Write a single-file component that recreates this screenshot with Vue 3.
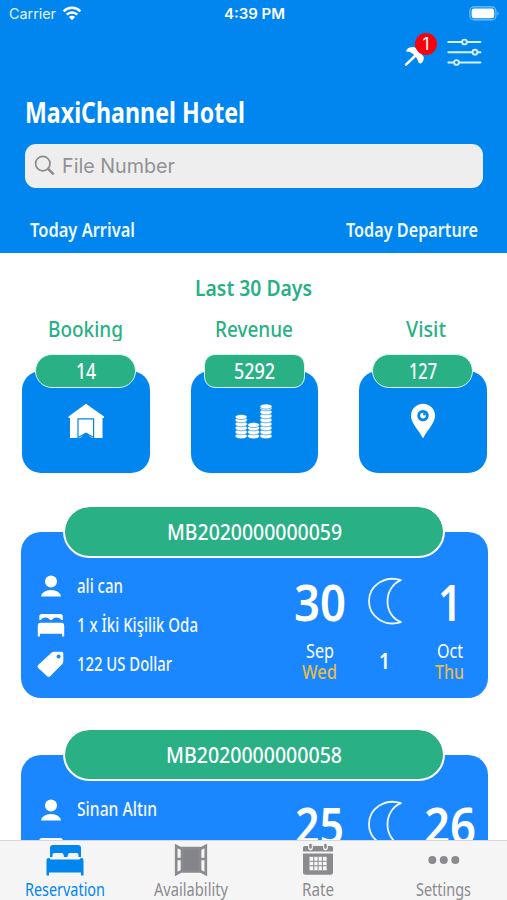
<script setup>
// Condenses a single-line label so that it occupies the given width.
const fitText = (el, { value }) => {
  el.style.transform = 'none'
  el.style.marginRight = '0'
  const natural = el.getBoundingClientRect().width
  el.style.transform = `scaleX(${value / natural})`
  el.style.marginRight = `${value - natural}px`
}
const vFit = { mounted: fitText, updated: fitText }

const stats = [
  { label: 'Booking', labelWidth: 75, value: '14', valueWidth: 20, icon: 'house' },
  { label: 'Revenue', labelWidth: 78, value: '5292', valueWidth: 41, icon: 'coins' },
  { label: 'Visit', labelWidth: 40, value: '127', valueWidth: 28, icon: 'pin' },
]

const coins = [
  { x: 241.2, top: 419, count: 5 },
  { x: 253.6, top: 427, count: 3 },
  { x: 266, top: 408.5, count: 8 },
]

const reservations = [
  {
    code: 'MB2020000000059', codeWidth: 175,
    guest: 'ali can', guestWidth: 46,
    room: '1 x İki Kişilik Oda', roomWidth: 121,
    price: '122 US Dollar', priceWidth: 95,
    nights: '1',
    from: { day: '30', dayWidth: 52, month: 'Sep', monthWidth: 28, week: 'Wed', weekWidth: 35 },
    to: { day: '1', dayWidth: 24, month: 'Oct', monthWidth: 26, week: 'Thu', weekWidth: 29 },
  },
  {
    code: 'MB2020000000058', codeWidth: 176,
    guest: 'Sinan Altın', guestWidth: 80,
    from: { day: '25', dayWidth: 49 },
    to: { day: '26', dayWidth: 52 },
  },
]

const tabs = [
  { label: 'Reservation', width: 80, icon: 'bed', active: true },
  { label: 'Availability', width: 74, icon: 'window' },
  { label: 'Rate', width: 32, icon: 'calendar' },
  { label: 'Settings', width: 55, icon: 'dots' },
]
</script>

<template>
  <div class="screen">
    <header class="header">
      <div class="status">
        <div class="carrier">
          <span v-fit="47">Carrier</span>
          <svg width="20" height="15" viewBox="0 0 20 15" fill="none" stroke="#fff" stroke-width="2.5">
            <path d="M1.6 5.3a12 12 0 0 1 16.8 0M4.7 8.6a7.6 7.6 0 0 1 10.6 0" />
            <path d="M10 14.2 6.9 11a4.4 4.4 0 0 1 6.2 0Z" fill="#fff" stroke="none" />
          </svg>
        </div>
        <span v-fit="61" class="clock">4:39 PM</span>
        <div class="battery-wrap">
          <svg width="31" height="15" viewBox="0 0 31 15">
            <rect x=".9" y=".9" width="26" height="13" rx="4" fill="none" stroke="#7fc2f7" stroke-width="1.1" />
            <rect x="2.6" y="2.6" width="22.6" height="9.6" rx="2.3" fill="#fff" />
            <path d="M28.5 5.2q2.2 2.2 0 4.4z" fill="#7fc2f7" />
          </svg>
        </div>
      </div>

      <div class="actions">
        <div class="notify">
          <svg width="23" height="23" viewBox="0 0 23 23">
            <path d="M2 19.7 11.500 10.500" stroke="#fff" stroke-width="2.5" stroke-linecap="round" />
            <path d="M2.300 5.200C4.500 1.300 10 1.300 12 3l7.500 8.500C20.500 14 19 17.700 16.500 18.400c-1.200.3-1.900-.6-2.300-1.600C13.500 14 12 12 10.200 10 8 8 6 6.700 4 6.800 2.300 6.800 1.800 6 2.300 5.200Z" fill="#fff" />
          </svg>
          <span class="badge">1</span>
        </div>
        <svg width="36" height="30" viewBox="0 0 36 30" fill="#0086ee" stroke="#d9f1ff" stroke-width="1.9" stroke-linecap="round">
          <path d="M1.3 5H33.500M1.300 15.200H33.500M1.300 25.500H33.500" />
          <circle cx="17.500" cy="5" r="2.400" /><circle cx="28" cy="15.200" r="2.400" /><circle cx="9.500" cy="25.500" r="2.400" />
        </svg>
      </div>

      <h1 class="hotel"><span v-fit="220">MaxiChannel Hotel</span></h1>

      <div class="search">
        <svg width="22" height="22" viewBox="0 0 22 22" fill="none" stroke="#8b8b8f">
          <circle cx="8.800" cy="8.600" r="7.200" stroke-width="1.700" />
          <path d="m14.200 14 5.500 5.300" stroke-width="2.500" />
        </svg>
        <span v-fit="113">File Number</span>
      </div>

      <nav class="today">
        <span v-fit="105">Today Arrival</span>
        <span v-fit="132">Today Departure</span>
      </nav>
    </header>

    <main class="content">
      <h2 class="period"><span v-fit="117">Last 30 Days</span></h2>

      <section class="stats">
        <article v-for="s in stats" :key="s.label" class="stat">
          <div class="stat-label" :class="s.icon"><span v-fit="s.labelWidth">{{ s.label }}</span></div>
          <div class="stat-pill" :class="{ squared: s.icon === 'coins' }">
            <span v-fit="s.valueWidth">{{ s.value }}</span>
          </div>
          <div class="tile">
            <svg v-if="s.icon === 'house'" width="36" height="36" viewBox="0 0 36 36">
              <path d="M18 .8 36 13.500v1.500h-1.500V35H2V15H.5v-1.500Z" fill="#fff" />
              <path d="M10 34.500V15.800h15.600v18.700L18 30.300Z" fill="#fff" stroke="#0086ee" stroke-width="1.200" />
              <path d="m12 35 6-5.200 6 5.200v1H12Z" fill="#0086ee" />
            </svg>
            <svg v-else-if="s.icon === 'coins'" width="38" height="36" viewBox="235 405 38 36" fill="#fff" stroke="#0086ee" stroke-width=".6">
              <g v-for="c in coins" :key="c.x">
                <ellipse v-for="n in c.count" :key="n" :cx="c.x" :cy="442 - n * 4" rx="6.200" ry="2.800" />
                <ellipse :cx="c.x" :cy="c.top" rx="6" ry="2.600" />
              </g>
            </svg>
            <svg v-else width="26" height="36" viewBox="0 0 26 36">
              <path d="M13 35.500C9.500 28 1 20.500 1 12.800a12 12 0 0 1 24 0C25 20.500 16.500 28 13 35.500Z" fill="#fff" />
              <circle cx="13" cy="12.600" r="5.700" fill="#0086ee" />
              <circle cx="13" cy="12.600" r="2.900" fill="#fff" />
              <circle cx="14.300" cy="11.200" r="1.300" fill="#0086ee" />
            </svg>
          </div>
        </article>
      </section>

      <section class="reservations">
        <article v-for="r in reservations" :key="r.code" class="reservation">
          <div class="code"><span v-fit="r.codeWidth">{{ r.code }}</span></div>
          <div class="card">
            <ul class="details">
              <li>
                <svg width="28" height="28" viewBox="0 0 28 28" fill="#fff">
                  <circle cx="14" cy="9.500" r="6" /><path d="M4 24.500q1.500-6.500 10-6.500t10 6.500Z" />
                </svg>
                <span v-fit="r.guestWidth">{{ r.guest }}</span>
              </li>
              <li>
                <svg width="28" height="28" viewBox="0 0 28 28" fill="#fff">
                  <path d="M2.300 9V5.500q0-2.500 2.500-2.500h18.500q2.500 0 2.500 2.500V9h-1.600q-1-2.600-4.700-2.600-3.600 0-4.500 2.600h-2q-1-2.600-4.600-2.600T4 9Z" />
                  <path d="M.8 25.500V14.800q0-3 2.800-3h20.700q2.900 0 2.900 3v10.700h-2.100v-2.700H3v2.700Z" />
                </svg>
                <span v-if="r.room" v-fit="r.roomWidth">{{ r.room }}</span>
              </li>
              <li v-if="r.price">
                <svg width="28" height="28" viewBox="0 0 28 28">
                  <path d="M1.200 15 14.500 2.700q1.200-1 2.700-1h7.300q1.800 0 1.800 1.800v7.700q0 1.500-1 2.700L13.200 26.200q-1.500 1.500-3 0L1.200 18q-1.600-1.500 0-3Z" fill="#fff" />
                  <circle cx="21.600" cy="6.600" r="2" fill="#1a86ff" />
                </svg>
                <span v-fit="r.priceWidth">{{ r.price }}</span>
              </li>
            </ul>
            <div class="stay">
              <div class="date">
                <strong><span v-fit="r.from.dayWidth">{{ r.from.day }}</span></strong>
                <template v-if="r.from.month">
                  <div class="month"><span v-fit="r.from.monthWidth">{{ r.from.month }}</span></div>
                  <div class="week"><span v-fit="r.from.weekWidth">{{ r.from.week }}</span></div>
                </template>
              </div>
              <div class="nights">
                <svg width="36" height="48" viewBox="0 0 36 48" fill="none" stroke="#f2faff" stroke-width="1.800" stroke-linejoin="round">
                  <path d="M34 3.200C18-2 2 8.500 2 24.200S18 50 34 45.200C16 38.500 16 10.500 34 3.200Z" />
                </svg>
                <b v-if="r.nights"><span v-fit="11">{{ r.nights }}</span></b>
              </div>
              <div class="date">
                <strong><span v-fit="r.to.dayWidth">{{ r.to.day }}</span></strong>
                <template v-if="r.to.month">
                  <div class="month"><span v-fit="r.to.monthWidth">{{ r.to.month }}</span></div>
                  <div class="week"><span v-fit="r.to.weekWidth">{{ r.to.week }}</span></div>
                </template>
              </div>
            </div>
          </div>
        </article>
      </section>
    </main>

    <footer class="tabs">
      <div v-for="t in tabs" :key="t.label" class="tab" :class="{ active: t.active }">
        <svg v-if="t.icon === 'bed'" width="38" height="34" viewBox="0 0 38 34" fill="currentColor">
          <path d="M4 14V5q0-3 3-3h25q3 0 3 3v9h-2.500v-2.300q0-1.700-1.700-1.700h-7q-2 0-2.300 4h-3.600q-.2-4-2.200-4H8.200q-1.700 0-1.700 1.700V14Z" />
          <path d="M.5 32.500V17q0-2 2-2t2 1.500h29q0-1.500 2-1.500t2 2v15.500h-2.500v-3H3v3Z" />
        </svg>
        <svg v-else-if="t.icon === 'window'" width="34" height="34" viewBox="0 0 34 34">
          <path d="M7.500 5h19v24h-19Z" fill="#84848d" />
          <path d="m2.200 3 5.800 3v22l-5.800 3Zm29.600 0L26 6v22l5.800 3ZM2.200 16H8m18 0h5.800M6.500 5.200h21M6.500 28.500h21" fill="none" stroke="#8b8b8f" stroke-width="2.700" />
        </svg>
        <svg v-else-if="t.icon === 'calendar'" width="32" height="34" viewBox="0 0 32 34">
          <path d="M1 8.500V4.800Q1 3 2.800 3h26.400Q31 3 31 4.800v3.700ZM1 10.500h30v19q0 2.300-2.300 2.300H3.300Q1 31.800 1 29.500Z" fill="#8b8b8f" />
          <path d="M7.500 13.800h17.200v13.500H7.500Z" fill="#f5f5f5" />
          <path d="M7.500 18.300h17.200M7.500 22.800h17.200M11.800 13.800v13.500M16.100 13.800v13.500M20.400 13.800v13.500" stroke="#8b8b8f" stroke-width="1" />
          <path d="M8.500 2v3M23.500 2v3" stroke="#f5f5f5" stroke-width="4.800" stroke-linecap="round" />
          <path d="M8.500 2v2.500M23.500 2v2.500" stroke="#8b8b8f" stroke-width="2.600" stroke-linecap="round" />
        </svg>
        <svg v-else width="34" height="34" viewBox="0 0 34 34" fill="#8b8b8f">
          <circle cx="5.300" cy="17" r="4" /><circle cx="16.800" cy="17" r="4" /><circle cx="28.300" cy="17" r="4" />
        </svg>
        <span v-fit="t.width">{{ t.label }}</span>
      </div>
    </footer>
  </div>
</template>

<style>
body { margin: 0; overflow: hidden; }
</style>

<style scoped>
.screen {
  width: 507px;
  height: 900px;
  display: flex;
  flex-direction: column;
  overflow: hidden;
  background: #fff;
  color: #fff;
  font-family: "Noto Sans", sans-serif;
}
.screen * { box-sizing: border-box; }
svg { display: block; flex: none; overflow: visible; }
span { white-space: nowrap; flex: none; display: inline-block; transform-origin: left center; }
h1, h2, ul { margin: 0; padding: 0; }

.header { height: 252.500px; flex: none; background: #0086ee; }
.status {
  height: 28px;
  display: grid;
  grid-template-columns: 1fr auto 1fr;
  align-items: center;
  padding: 0 7px 0 9px;
  font: 400 14.500px/28px Inter, sans-serif;
  color: #e5f4ff;
}
.carrier { display: flex; gap: 6px; align-items: center; margin-top: -1px; }
.clock { font-weight: 600; color: #fff; }
.battery-wrap { display: flex; justify-content: flex-end; margin-top: -2px; }
.actions { height: 63px; padding: 9px 24px 0 0; display: flex; justify-content: flex-end; align-items: flex-start; gap: 20px; }
.notify { position: relative; padding: 8px 0 0 0; }
.badge {
  position: absolute;
  left: 11px;
  top: -4px;
  width: 22px;
  height: 22px;
  border-radius: 50%;
  background: #f9000d;
  font: 400 17px/22px Inter, sans-serif;
  text-align: center;
}
.hotel { height: 53px; padding-left: 25px; font-size: 28.500px; line-height: 43px; font-weight: 700; }
.hotel span { -webkit-text-stroke: 0; }
.search {
  height: 44px;
  margin: 0 24.500px 0 25px;
  padding-left: 9px;
  display: flex;
  align-items: center;
  gap: 5.500px;
  border-radius: 11px;
  background: #eee;
  color: #929296;
  font: 400 20px/44px Inter, sans-serif;
}
.today { display: flex; justify-content: space-between; padding: 28px 29px 0 30px; font-size: 20px; line-height: 28px; font-weight: 600; color: #edf9ff; }

.content { flex: 1; min-height: 0; overflow: hidden; }
.period { height: 63.500px; padding-top: 20px; text-align: center; font-size: 21.500px; line-height: 30px; font-weight: 600; color: #29b085; }
.stats { display: flex; justify-content: space-between; padding: 0 20.500px 0 22px; }
.stat { width: 127.500px; display: flex; flex-direction: column; align-items: center; }
.stat-label { height: 24.500px; overflow: hidden; font-size: 22px; line-height: 24.500px; font-weight: 500; color: #29b085; }
.stat-label.pin { padding-left: 6px; }
.stat-pill {
  position: relative;
  width: 101px;
  height: 34.500px;
  margin-top: 13px;
  display: flex;
  justify-content: center;
  border: 1.200px solid #d7f5f0;
  border-radius: 18px;
  background: #29b085;
  font-size: 21px;
  line-height: 33px;
  font-weight: 500;
}
.stat-pill.squared { border-radius: 11px; }
.tile {
  width: 127.500px;
  height: 102px;
  margin-top: -17px;
  padding-top: 32px;
  display: flex;
  justify-content: center;
  border-radius: 19px;
  background: #0086ee;
}

.reservations { padding: 31.500px 19.500px 0 20.500px; }
.reservation { height: 223.700px; display: flex; flex-direction: column; align-items: center; }
.code {
  position: relative;
  width: 382px;
  height: 53px;
  display: flex;
  justify-content: center;
  border: 2px solid #fff;
  border-radius: 27px;
  background: #29b085;
  background-clip: padding-box;
  font-size: 21.500px;
  line-height: 49px;
  font-weight: 500;
}
.card {
  width: 100%;
  height: 166.500px;
  margin-top: -26px;
  padding: 35px 0 0 16px;
  display: flex;
  justify-content: space-between;
  border-radius: 20px;
  background: #1a86ff;
}
.details { list-style: none; }
.details li { height: 39px; display: flex; align-items: center; gap: 12px; font-size: 19px; line-height: 26px; font-weight: 500; color: #f4faff; }
.details span { margin-top: -1px; }
.stay { display: flex; }
.date { width: 76px; display: flex; flex-direction: column; align-items: center; }
.date strong { height: 74px; font-size: 50px; line-height: 70px; font-weight: 600; }
.month { font-size: 19px; line-height: 21px; height: 21px; font-weight: 400; }
.week { font-size: 19px; line-height: 21px; color: #e0bd4e; font-weight: 500; }
.nights { width: 54px; padding-top: 10px; display: flex; flex-direction: column; align-items: center; }
.nights b { margin-top: 19px; font-size: 22px; line-height: 32px; font-weight: 600; }

.tabs {
  height: 60px;
  flex: none;
  display: grid;
  grid-template-columns: repeat(4, 1fr);
  padding-left: 2px;
  border-top: 1px solid #d8d8d8;
  background: #f5f5f5;
  color: #8b8b8f;
}
.tab { display: flex; flex-direction: column; align-items: center; padding-top: 2px; font-size: 18px; line-height: 24px; font-weight: 400; }
.tab.active { color: #0086ee; }
</style>
